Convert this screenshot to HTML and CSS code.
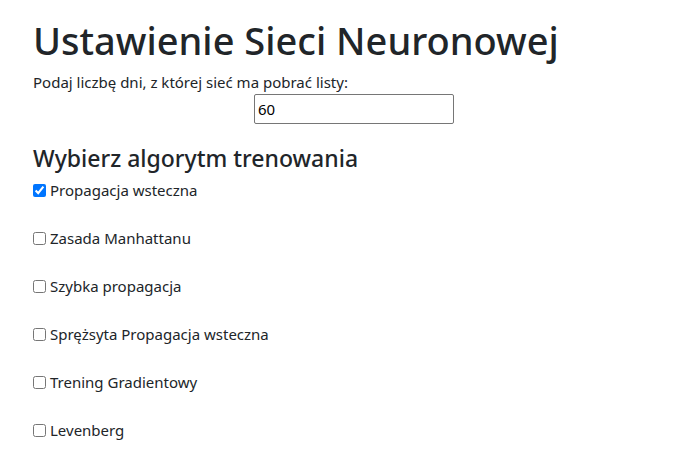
FILE: index.html
```html
<!DOCTYPE html>
<html lang="pl">
<head>
<meta charset="utf-8">
<title>Ustawienie Sieci Neuronowej</title>
<link rel="stylesheet" href="styles.css">
</head>
<body>
<main class="page">
  <h1 class="title">Ustawienie Sieci Neuronowej</h1>
  <label class="days-label" for="days">Podaj liczbę dni, z której sieć ma pobrać listy:</label>
  <div class="days-row">
    <input class="days-input" id="days" type="text" value="60">
  </div>
  <h4 class="subtitle">Wybierz algorytm trenowania</h4>
  <ul class="algos">
    <li class="algo"><input type="checkbox" id="a1" checked><label for="a1">Propagacja wsteczna</label></li>
    <li class="algo"><input type="checkbox" id="a2"><label for="a2">Zasada Manhattanu</label></li>
    <li class="algo"><input type="checkbox" id="a3"><label for="a3">Szybka propagacja</label></li>
    <li class="algo"><input type="checkbox" id="a4"><label for="a4">Sprężsyta Propagacja wsteczna</label></li>
    <li class="algo"><input type="checkbox" id="a5"><label for="a5">Trening Gradientowy</label></li>
    <li class="algo"><input type="checkbox" id="a6"><label for="a6">Levenberg</label></li>
  </ul>
</main>
</body>
</html>
```
FILE: styles.css
```css
html, body {
  margin: 0;
  padding: 0;
  background: #fff;
}
body {
  font-family: "Noto Sans", "Open Sans", sans-serif;
  color: #212529;
  font-size: 15px;
}
.page {
  padding: 17px 3px 0 33px;
}
.title {
  font-size: 38px;
  font-weight: 500;
  line-height: 46px;
  margin: 0 0 9px 0;
}
.days-label {
  display: block;
  font-size: 15px;
  line-height: 20px;
}
.days-row {
  text-align: center;
  padding-top: 2px;
  line-height: 0;
}
.days-input {
  width: 200px;
  height: 30px;
  box-sizing: border-box;
  border: 1px solid #767676;
  border-radius: 2px;
  padding: 0 3px;
  font-family: "Noto Sans", sans-serif;
  font-size: 15px;
  color: #000;
  margin: 0;
}
.subtitle {
  font-size: 23px;
  font-weight: 500;
  line-height: 28px;
  margin: 20px 0 8px 0;
}
.algos {
  list-style: none;
  margin: 0;
  padding: 0;
  display: flex;
  flex-direction: column;
  gap: 28px;
}
.algo {
  display: flex;
  align-items: center;
  height: 20px;
  font-size: 15px;
}
.algo input {
  width: 13px;
  height: 13px;
  margin: 0 4px 0 0;
}
```
